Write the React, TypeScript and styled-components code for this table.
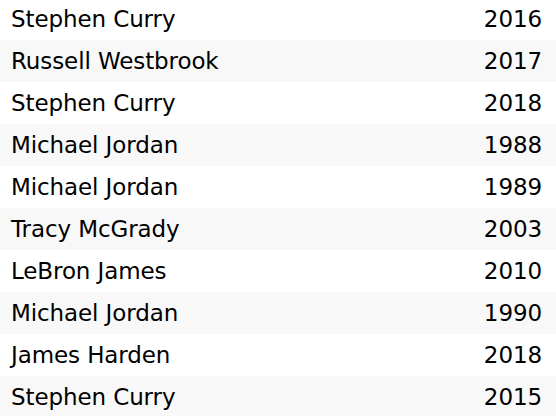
import React from 'react'
import styled, { createGlobalStyle } from 'styled-components'

const GlobalStyle = createGlobalStyle`
  html, body {
    margin: 0;
    padding: 0;
    background: #ffffff;
  }
`

const players = [
  { name: 'Stephen Curry', year: 2016 },
  { name: 'Russell Westbrook', year: 2017 },
  { name: 'Stephen Curry', year: 2018 },
  { name: 'Michael Jordan', year: 1988 },
  { name: 'Michael Jordan', year: 1989 },
  { name: 'Tracy McGrady', year: 2003 },
  { name: 'LeBron James', year: 2010 },
  { name: 'Michael Jordan', year: 1990 },
  { name: 'James Harden', year: 2018 },
  { name: 'Stephen Curry', year: 2015 },
]

const Table = styled.div`
  display: flex;
  flex-direction: column;
  width: 556px;
  height: 416px;
  overflow: hidden;
  font-family: 'DejaVu Sans', Verdana, sans-serif;
  color: #000;
`

const Row = styled.div<{ $striped: boolean }>`
  display: flex;
  flex-direction: row;
  justify-content: space-between;
  align-items: center;
  flex: 0 0 42px;
  height: 42px;
  padding: 0 14px 0 11px;
  box-sizing: border-box;
  background-color: ${(props) => (props.$striped ? '#f8f8f8' : '#ffffff')};
  &:first-child {
    margin-top: -2px;
  }
`

const Cell = styled.span`
  font-size: 23px;
  line-height: 1;
  letter-spacing: -0.1px;
`

const App: React.FC = () => {
  return (
    <>
      <GlobalStyle />
      <Table>
        {players.map((p, i) => (
          <Row key={i} $striped={i % 2 === 1}>
            <Cell>{p.name}</Cell>
            <Cell>{p.year}</Cell>
          </Row>
        ))}
      </Table>
    </>
  )
}

export default App
